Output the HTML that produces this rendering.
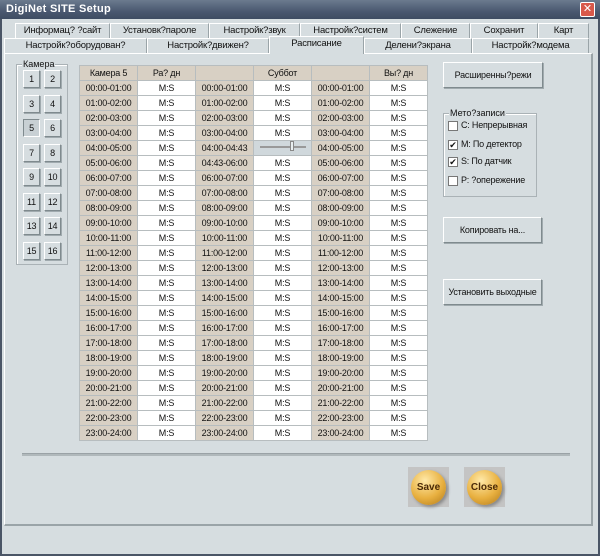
<!DOCTYPE html>
<html><head><meta charset="utf-8"><style>
*{box-sizing:border-box;margin:0;padding:0}
body{width:600px;height:556px;background:#d6dde0;font-family:"Liberation Sans",sans-serif;font-size:9px;color:#111;position:relative;overflow:hidden;white-space:nowrap}
.abs{position:absolute}
#win{left:0;top:0;width:600px;height:556px;border:2px solid #4a5566;border-top:none}
#title{left:0;top:0;width:600px;height:19px;background:linear-gradient(#6b7a8e,#4a5870 60%,#3e4c62);color:#fff;font-weight:bold;font-size:11px;padding:3px 6px;letter-spacing:.3px}
#x{left:580px;top:2px;width:15px;height:15px;background:#d8584a;border:1px solid #fff;color:#fff;font-size:11px;line-height:13px;text-align:center;border-radius:2px}
.tab{position:absolute;height:16px;border:1px solid #9aa4a8;border-bottom:none;border-top-color:#fff;border-left-color:#fff;background:#d6dde0;text-align:center;line-height:14px;font-size:9.5px;letter-spacing:-.2px}
#panel{left:4px;top:53px;width:589px;height:473px;border:1px solid #fff;border-right:2px solid #9aa4a8;border-bottom:2px solid #9aa4a8}
.grp{position:absolute;border:1px solid #aab2b6;box-shadow:inset 1px 1px 0 #fff}
.grp .lg{position:absolute;top:-6px;left:5px;background:#d6dde0;padding:0 1px}
.btn{position:absolute;border:1px solid #fff;border-right-color:#7f8a8e;border-bottom-color:#7f8a8e;box-shadow:1px 1px 0 #a0aaae;background:#d6dde0;text-align:center;font-size:9px;letter-spacing:-.2px}
table{position:absolute;left:79px;top:65px;border-collapse:collapse;background:#b7bdbf}
td{width:58px;height:15px;border:1px solid #b7bdbf;text-align:center;font-size:9px;padding:0;line-height:13px;letter-spacing:-.2px}
td.g{background:#d8d0c4}
td.w{background:#fff}
.cb{position:absolute;width:10px;height:10px;background:#fff;border:1px solid #777;font-size:9px;line-height:8px;text-align:center}
.ball{position:absolute;width:41px;height:40px;background:#c4c4c4}
.ball div{position:absolute;left:3px;top:3px;width:35px;height:35px;border-radius:50%;background:radial-gradient(circle at 40% 30%,#ffe9a8,#e8b040 55%,#b07818);box-shadow:2px 2px 3px #888;color:#4a2a08;font-weight:bold;font-size:10px;text-align:center;line-height:35px}
.lbl{position:absolute;font-size:9px;letter-spacing:-.2px}
</style></head><body>
<div id="win" class="abs"></div>
<div id="title" class="abs">DigiNet SITE Setup</div>
<div id="x" class="abs">✕</div>

<div class="tab" style="left:15px;top:23px;width:95px">Информац? ?сайт</div>
<div class="tab" style="left:110px;top:23px;width:99px">Установк?пароле</div>
<div class="tab" style="left:209px;top:23px;width:91px">Настройк?звук</div>
<div class="tab" style="left:300px;top:23px;width:101px">Настройк?систем</div>
<div class="tab" style="left:401px;top:23px;width:69px">Слежение</div>
<div class="tab" style="left:470px;top:23px;width:68px">Сохранит</div>
<div class="tab" style="left:538px;top:23px;width:51px">Карт</div>
<div class="tab" style="left:4px;top:38px;width:143px">Настройк?оборудован?</div>
<div class="tab" style="left:147px;top:38px;width:122px">Настройк?движен?</div>
<div class="tab" style="left:269px;top:36px;width:95px;height:18px;z-index:2;border-bottom:none">Расписание</div>
<div class="tab" style="left:364px;top:38px;width:108px">Делени?экрана</div>
<div class="tab" style="left:472px;top:38px;width:117px">Настройк?модема</div>
<div id="panel" class="abs"></div>

<div class="grp" style="left:16px;top:64px;width:52px;height:201px"><span class="lg">Камера</span></div>
<div class="btn" style="left:23px;top:70px;width:17px;height:18px;line-height:16px">1</div>
<div class="btn" style="left:44px;top:70px;width:17px;height:18px;line-height:16px">2</div>
<div class="btn" style="left:23px;top:95px;width:17px;height:18px;line-height:16px">3</div>
<div class="btn" style="left:44px;top:95px;width:17px;height:18px;line-height:16px">4</div>
<div class="btn" style="left:23px;top:119px;width:17px;height:18px;line-height:16px;background:#c8d0d4;border-color:#7f8a8e #fff #fff #7f8a8e;box-shadow:none">5</div>
<div class="btn" style="left:44px;top:119px;width:17px;height:18px;line-height:16px">6</div>
<div class="btn" style="left:23px;top:144px;width:17px;height:18px;line-height:16px">7</div>
<div class="btn" style="left:44px;top:144px;width:17px;height:18px;line-height:16px">8</div>
<div class="btn" style="left:23px;top:168px;width:17px;height:18px;line-height:16px">9</div>
<div class="btn" style="left:44px;top:168px;width:17px;height:18px;line-height:16px">10</div>
<div class="btn" style="left:23px;top:193px;width:17px;height:18px;line-height:16px">11</div>
<div class="btn" style="left:44px;top:193px;width:17px;height:18px;line-height:16px">12</div>
<div class="btn" style="left:23px;top:217px;width:17px;height:18px;line-height:16px">13</div>
<div class="btn" style="left:44px;top:217px;width:17px;height:18px;line-height:16px">14</div>
<div class="btn" style="left:23px;top:242px;width:17px;height:18px;line-height:16px">15</div>
<div class="btn" style="left:44px;top:242px;width:17px;height:18px;line-height:16px">16</div>

<table id="t"><tr><td class="g">Камера 5</td><td class="g">Ра? дн</td><td class="g"></td><td class="g">Суббот</td><td class="g"></td><td class="g">Вы? дн</td></tr></table>
<script>
var t=document.getElementById('t'),h='';
function p(n){return (n<10?'0':'')+n+':00'}
for(var i=0;i<24;i++){var r=p(i)+'-'+p(i+1),m=r;
if(i==4)m='04:00-04:43';if(i==5)m='04:43-06:00';
var s=i==4?'<td class="g" style="background:#d0d8dc;border:1px dashed #666"></td>':'<td class="w">M:S</td>';
h+='<tr><td class="g">'+r+'</td><td class="w">M:S</td><td class="g">'+m+'</td>'+s+'<td class="g">'+r+'</td><td class="w">M:S</td></tr>';}
t.innerHTML+=h;
</script>
<div class="abs" style="left:260px;top:146px;width:46px;height:2px;background:#999"></div>
<div class="abs" style="left:290px;top:141px;width:4px;height:10px;background:#e8eef0;border:1px solid #888"></div>

<div class="btn" style="left:443px;top:62px;width:100px;height:26px;line-height:24px">Расширенны?режи</div>
<div class="grp" style="left:443px;top:113px;width:94px;height:84px"><span class="lg">Мето?записи</span></div>
<div class="cb" style="left:448px;top:121px"></div><div class="lbl" style="left:461px;top:120px">C: Непрерывная</div>
<div class="cb" style="left:448px;top:140px">✔</div><div class="lbl" style="left:461px;top:139px">M: По детектор</div>
<div class="cb" style="left:448px;top:157px">✔</div><div class="lbl" style="left:461px;top:156px">S: По датчик</div>
<div class="cb" style="left:448px;top:176px"></div><div class="lbl" style="left:461px;top:175px">P: ?опережение</div>
<div class="btn" style="left:443px;top:217px;width:99px;height:26px;line-height:24px">Копировать на...</div>
<div class="btn" style="left:443px;top:279px;width:99px;height:26px;line-height:24px">Установить выходные</div>

<div class="abs" style="left:22px;top:453px;width:548px;height:3px;background:#b0b8bb;border-top:1px solid #9aa2a6"></div>
<div class="ball" style="left:408px;top:467px"><div>Save</div></div>
<div class="ball" style="left:464px;top:467px"><div>Close</div></div>
</body></html>
